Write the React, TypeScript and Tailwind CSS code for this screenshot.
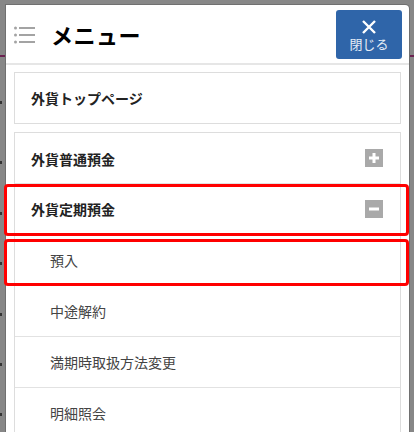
import { Fragment } from "react";

const subItems = ["預入", "中途解約", "満期時取扱方法変更", "明細照会"];

function SquareIcon({ open }: { open: boolean }) {
  return (
    <span className="flex h-[18px] w-[18px] items-center justify-center bg-[#a9a9a9]">
      <svg width="12" height="12" viewBox="0 0 12 12">
        <rect x="1" y="4.5" width="10" height="3" fill="#fff" />
        {!open && <rect x="4.5" y="1" width="3" height="10" fill="#fff" />}
      </svg>
    </span>
  );
}

export default function App() {
  return (
    <div
      className="relative h-[432px] w-[414px] overflow-hidden bg-[#878787]"
      style={{ fontFamily: '"Noto Sans CJK JP", "Noto Sans", sans-serif' }}
    >
      {/* page behind the overlay */}
      <div className="absolute left-0 top-[55px] h-[2px] w-full bg-[#6b2150]" />
      {[101, 161, 212, 262, 313, 363, 413].map((y) => (
        <span key={y} className="absolute left-0 h-[3px] w-[2px] bg-[#333]" style={{ top: y }} />
      ))}

      <div className="relative ml-[6px] mt-[5px] w-[403px] rounded-tr-[4px] bg-white shadow-[0_0_0_1px_#707070]">
        {/* header */}
        <div className="flex h-[60px] items-center border-b-2 border-[#e6e6e6] pl-[8px] pr-[7px]">
          <svg width="22" height="18" viewBox="0 0 22 18" className="mt-[1px]">
            {[2, 9, 16].map((y) => (
              <Fragment key={y}>
                <circle cx="1.5" cy={y} r="1.5" fill="#a3a3a3" />
                <rect x="5" y={y - 1} width="16" height="2" fill="#a3a3a3" />
              </Fragment>
            ))}
          </svg>
          <h1 className="ml-[15px] text-[22px] font-bold leading-none tracking-[0.5px] text-black">メニュー</h1>
          <button className="ml-auto flex h-[49px] w-[66px] flex-col items-center justify-center rounded-[3px] bg-[#2f65a9] pt-[2px]">
            <svg width="14" height="14" viewBox="0 0 14 14">
              <path d="M1 1L13 13M13 1L1 13" stroke="#fff" strokeWidth="2.4" />
            </svg>
            <span className="mt-[3px] text-[13px] leading-none text-[#e6edf7]">閉じる</span>
          </button>
        </div>

        {/* content */}
        <div className="px-[8px] pt-[7px]">
          <div className="flex h-[52px] items-center border border-[#dddddd] pl-4 text-[14px] font-bold text-[#222]">
            外貨トップページ
          </div>

          <div className="mt-[8px] border border-[#dddddd]">
            <div className="flex h-[51px] items-center justify-between border-b border-[#e2e2e2] pl-4 pr-[17px] text-[14px] font-bold text-[#222]">
              <span className="mt-[2px]">外貨普通預金</span>
              <SquareIcon open={false} />
            </div>
            <div className="flex h-[51px] items-center justify-between border-b border-[#e2e2e2] pl-4 pr-[17px] text-[14px] font-bold text-[#222]">
              <span>外貨定期預金</span>
              <SquareIcon open />
            </div>
            {subItems.map((label) => (
              <div
                key={label}
                className="flex h-[51px] items-center border-b border-[#e2e2e2] pl-[35px] text-[14px] text-[#444]"
              >
                {label}
              </div>
            ))}
          </div>
        </div>
      </div>

      {/* highlight annotations */}
      <div className="absolute left-[4px] top-[184px] h-[52px] w-[405px] rounded-[4px] border-[3px] border-[#ff0000]" />
      <div className="absolute left-[4px] top-[239px] h-[47px] w-[405px] rounded-[4px] border-[3px] border-[#ff0000]" />
    </div>
  );
}
